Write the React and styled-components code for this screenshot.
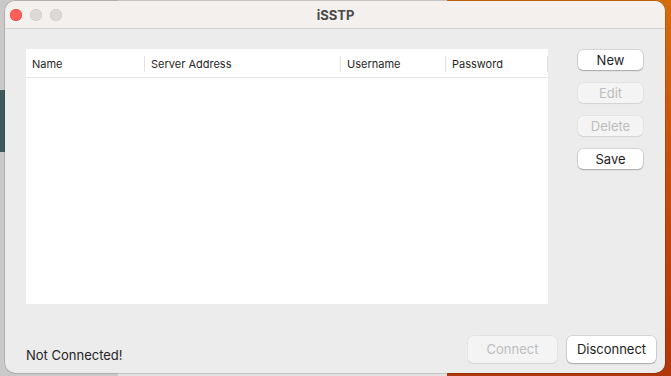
import React from "react";
import styled, { createGlobalStyle } from "styled-components";

const GlobalStyle = createGlobalStyle`
  html, body {
    margin: 0;
    padding: 0;
    width: 671px;
    height: 376px;
    overflow: hidden;
  }
  body {
    font-family: Inter, "Liberation Sans", sans-serif;
    -webkit-font-smoothing: antialiased;
  }
`;

const Desktop = styled.div`
  width: 671px;
  height: 376px;
  box-sizing: border-box;
  padding: 1px 6px 3px 5px;
  background:
    linear-gradient(#415a5b, #415a5b) 0 90px / 6px 62px no-repeat,
    linear-gradient(180deg, #d56c0c 0%, #c54a0c 50%, #b0360b 100%) 447px 0 / 224px 376px no-repeat,
    linear-gradient(90deg, #c9c9c9 0, #c9c9c9 118px, #e4e2e0 118px, #e4e2e0 447px);
`;

const Window = styled.div`
  height: 100%;
  display: flex;
  flex-direction: column;
  background: #ececec;
  border-radius: 10px;
  overflow: hidden;
  box-shadow: 0 0 0 0.5px rgba(0, 0, 0, 0.25);
`;

const TitleBar = styled.div`
  height: 27px;
  flex: none;
  display: flex;
  align-items: center;
  padding-left: 4px;
  background: #f3f0ee;
  border-bottom: 1px solid #d3d1cf;
`;

const Lights = styled.div`
  display: flex;
  gap: 8px;
  padding-left: 1px;
`;

const Light = styled.span`
  width: 12px;
  height: 12px;
  border-radius: 50%;
  background: ${(p) => (p.$red ? "#fe5f57" : "#dcdad8")};
  box-shadow: inset 0 0 0 0.5px ${(p) => (p.$red ? "#e2463f" : "#c9c7c5")};
`;

const Title = styled.div`
  flex: 1;
  text-align: center;
  margin-right: 56px;
  font-size: 13px;
  font-weight: 700;
  color: #4b4a49;
`;

const Content = styled.div`
  flex: 1;
  display: flex;
  flex-direction: column;
  padding: 20px 9px 10px 21px;
`;

const Main = styled.div`
  display: flex;
  gap: 30px;
  padding-right: 13px;
`;

const Table = styled.div`
  width: 522px;
  height: 255px;
  background: #fff;
  display: flex;
  flex-direction: column;
`;

const HeaderRow = styled.div`
  height: 27px;
  padding-top: 1px;
  display: flex;
  align-items: center;
  border-bottom: 1px solid #e4e4e4;
`;

const HeaderCell = styled.div`
  width: ${(p) => p.$w}px;
  box-sizing: border-box;
  padding-left: 6px;
  font-size: 11px;
  color: #262626;
  height: 16px;
  line-height: 16px;
  border-right: 1px solid #e2e2e2;
`;

const Side = styled.div`
  display: flex;
  flex-direction: column;
  gap: 13px;
  padding-top: 1px;
`;

const SmallButton = styled.button`
  width: 65px;
  height: 20px;
  padding: 0;
  border: none;
  border-radius: 5px;
  font-family: inherit;
  font-size: 13px;
  background: ${(p) => (p.disabled ? "#f4f4f4" : "#ffffff")};
  color: ${(p) => (p.disabled ? "#bdbdbd" : "#1e1e1e")};
  box-shadow: ${(p) =>
    p.disabled
      ? "0 0 0 0.5px rgba(0,0,0,0.06), 0 0.5px 1px rgba(0,0,0,0.08)"
      : "0 0 0 0.5px rgba(0,0,0,0.18), 0 1px 1.5px rgba(0,0,0,0.22)"};
`;

const Footer = styled.div`
  margin-top: auto;
  display: flex;
  align-items: center;
`;

const Status = styled.div`
  flex: 1;
  font-size: 13px;
  color: #262626;
  padding-top: 12px;
`;

const BigButton = styled(SmallButton)`
  width: ${(p) => p.$w}px;
  height: 27px;
  margin-left: 10px;
  font-size: 13px;
`;

const columns = [
  ["Name", 119],
  ["Server Address", 196],
  ["Username", 105],
  ["Password", 102],
];

export default function App() {
  return (
    <>
      <GlobalStyle />
      <Desktop>
        <Window>
          <TitleBar>
            <Lights>
              <Light $red />
              <Light />
              <Light />
            </Lights>
            <Title>iSSTP</Title>
          </TitleBar>
          <Content>
            <Main>
              <Table>
                <HeaderRow>
                  {columns.map(([label, w]) => (
                    <HeaderCell key={label} $w={w}>
                      {label}
                    </HeaderCell>
                  ))}
                </HeaderRow>
              </Table>
              <Side>
                <SmallButton>New</SmallButton>
                <SmallButton disabled>Edit</SmallButton>
                <SmallButton disabled>Delete</SmallButton>
                <SmallButton>Save</SmallButton>
              </Side>
            </Main>
            <Footer>
              <Status>Not Connected!</Status>
              <BigButton $w={89} disabled>
                Connect
              </BigButton>
              <BigButton $w={89}>Disconnect</BigButton>
            </Footer>
          </Content>
        </Window>
      </Desktop>
    </>
  );
}
